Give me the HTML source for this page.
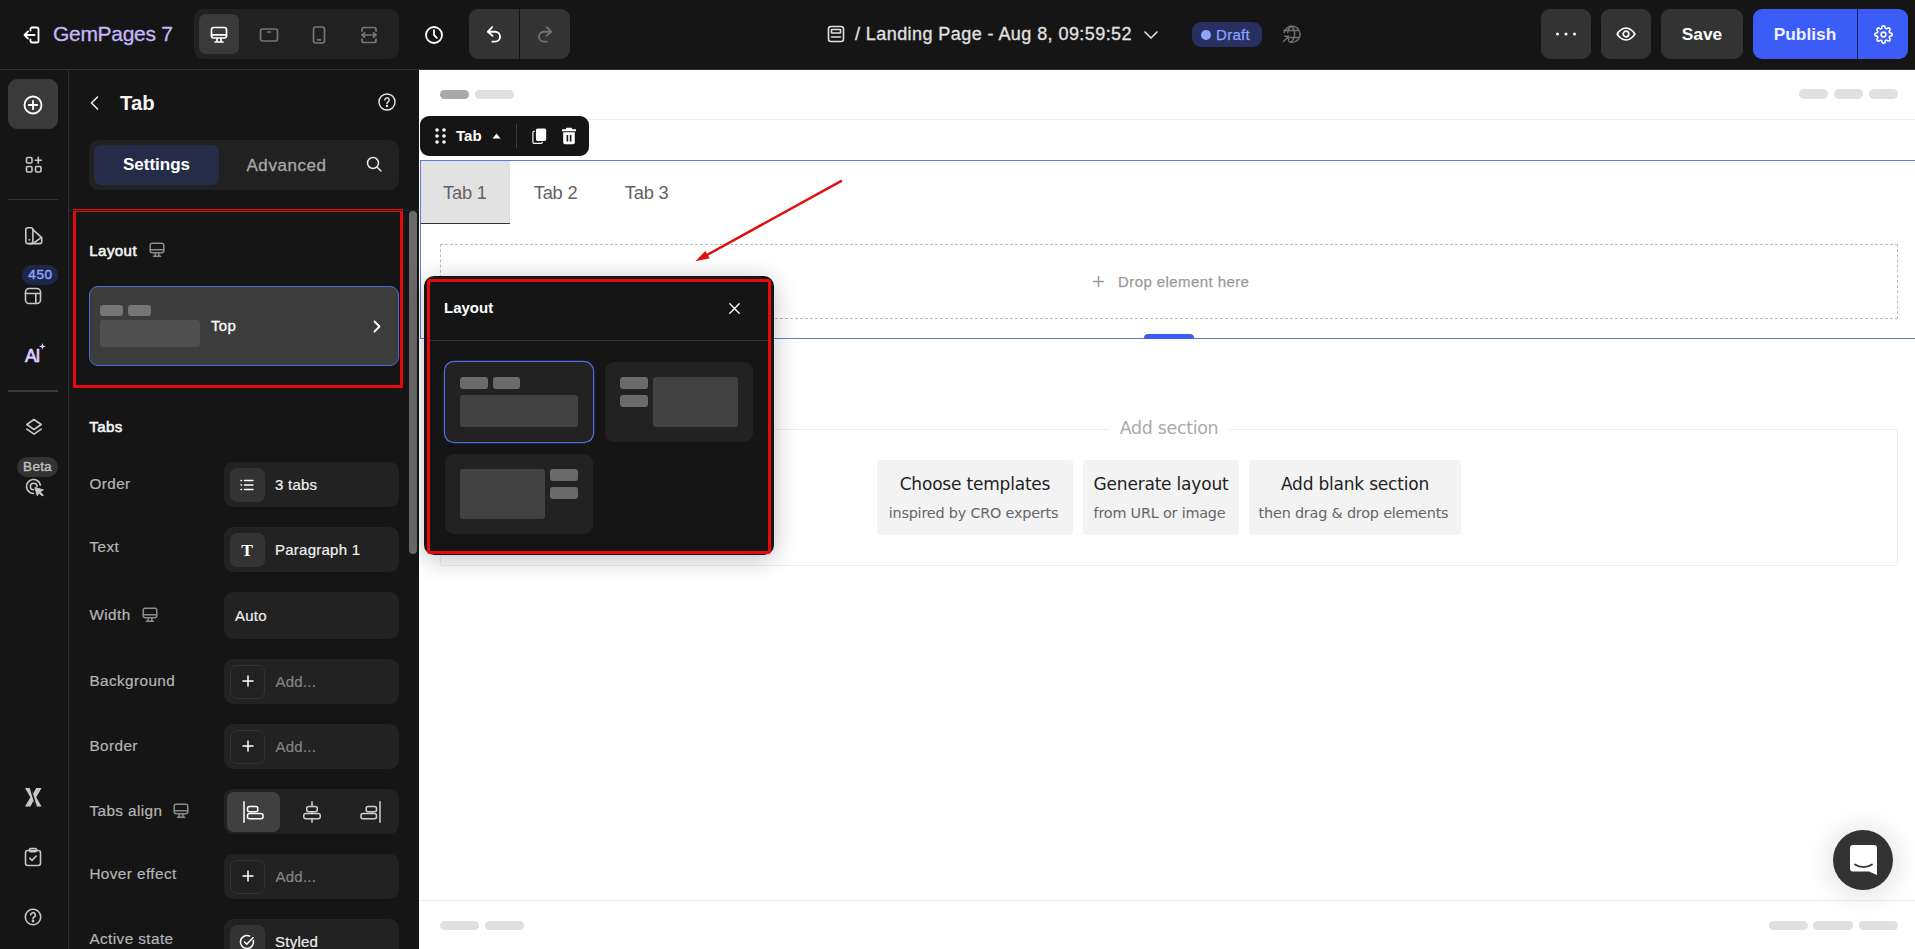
<!DOCTYPE html>
<html lang="en">
<head>
<meta charset="utf-8">
<title>GemPages 7 - Tab Layout</title>
<style>
*{box-sizing:border-box;margin:0;padding:0}
html,body{width:1915px;height:949px;overflow:hidden;background:#151515;font-family:"Liberation Sans",Arial,sans-serif;color:#fff}
.abs{position:absolute}
svg{display:block;overflow:visible}
#app{position:relative;width:1915px;height:949px;overflow:hidden;background:#151515}
/* top bar */
#topbar{position:absolute;left:0;top:0;width:1915px;height:70px;background:#151515;border-bottom:1px solid #333}
.brand{position:absolute;left:53px;top:20px;font-size:21px;line-height:28px;color:#c6b5f7;letter-spacing:-.3px;white-space:nowrap;-webkit-text-stroke:.3px #c6b5f7}
.devgroup{position:absolute;left:194px;top:9px;width:205px;height:50px;background:#212121;border-radius:9px}
.devactive{position:absolute;left:5px;top:5px;width:40px;height:40px;background:#3a3a3a;border-radius:7px}
.undogroup{position:absolute;left:469px;top:9px;width:101px;height:50px;background:#333;border-radius:9px}
.undogroup:after{content:"";position:absolute;left:50px;top:0;width:1px;height:50px;background:#151515}
.title{position:absolute;left:855px;top:22px;font-size:18px;line-height:24px;color:#e2e2e2;white-space:nowrap;letter-spacing:.43px;-webkit-text-stroke:.3px #e2e2e2}
.draft{position:absolute;left:1192px;top:22px;width:70px;height:25px;border-radius:9px;background:#263061;color:#8fa2ff;font-size:15px;line-height:25px;padding-left:24px;letter-spacing:.3px;-webkit-text-stroke:.25px #8fa2ff}
.draft:before{content:"";position:absolute;left:9px;top:7.500px;width:10px;height:10px;border-radius:50%;background:#8fa2ff}
.tbtn{position:absolute;top:9px;height:50px;background:#333;border-radius:9px}
.tbtn.txt{font-size:17.300px;font-weight:700;line-height:50px;text-align:center;color:#fff}
.pub{position:absolute;left:1753px;top:9px;width:155px;height:50px;background:#3b5cf6;border-radius:9px}
.pub span{position:absolute;left:0;top:0;width:104px;line-height:50px;text-align:center;font-size:17.300px;font-weight:700;color:#f1f1ff}
.pub:after{content:"";position:absolute;left:104px;top:0;width:1px;height:50px;background:#16205a}
/* rail */
#rail{position:absolute;left:0;top:70px;width:69px;height:879px;background:#151515;border-right:1px solid #2e2e2e}
.railadd{position:absolute;left:8px;top:9px;width:50px;height:50px;background:#3a3a3a;border-radius:9px}
.raildiv{position:absolute;left:8px;width:50px;height:1px;background:#333}
.badge{position:absolute;font-size:14px;line-height:18px;text-align:center;border-radius:9px}
/* panel */
#panel{position:absolute;left:69px;top:70px;width:350px;height:879px;background:#151515;overflow:hidden}
.ptitle{position:absolute;left:51px;top:19px;font-size:20.300px;line-height:28px;font-weight:700;color:#f5f5f5}
.seg{position:absolute;left:20px;top:70px;width:310px;height:49.500px;background:#212121;border-radius:9px}
.seg .on{position:absolute;left:5px;top:5px;width:125px;height:39.700px;background:#252c48;border-radius:7px;font-size:17px;font-weight:700;line-height:40.700px;text-align:center;color:#fff}
.seg .off{position:absolute;left:130px;top:5.700px;width:135px;height:39.700px;font-size:17px;line-height:39.700px;text-align:center;color:#a8a8a8;letter-spacing:.55px;-webkit-text-stroke:.3px #a8a8a8}
.h{position:absolute;left:20.300px;font-size:15px;font-weight:400;line-height:20px;color:#f4f4f4;letter-spacing:.45px;-webkit-text-stroke:.6px #f4f4f4}
.lbl{position:absolute;left:20.400px;font-size:15.300px;line-height:20px;color:#b5b5b5;white-space:nowrap;letter-spacing:.42px;-webkit-text-stroke:.2px #b5b5b5}
.ctl{position:absolute;left:155px;width:175px;height:45.300px;background:#222;border-radius:9px}
.ctl .ib{position:absolute;left:6px;top:5.500px;width:34.500px;height:34px;background:#333;border-radius:7px}
.ctl .ib.dk{background:#212121;border:1px solid #323232}
.ctl .v{position:absolute;left:51px;top:12.600px;font-size:15px;line-height:20px;color:#f0f0f0;white-space:nowrap;letter-spacing:.25px;-webkit-text-stroke:.2px #f0f0f0}
.ctl .v.ph{color:#848484;-webkit-text-stroke:.2px #848484;left:51.500px}
.redbox{position:absolute;border:3.300px solid #e60a0a;pointer-events:none}
/* canvas */
#canvas{position:absolute;left:419px;top:70px;width:1496px;height:879px;background:#fff;overflow:hidden}
.pill{position:absolute;height:9.600px;border-radius:5px;background:#e0e0e0}
.cbtn{position:absolute;top:390px;height:75px;background:#f3f3f3;border-radius:4px;text-align:center;font-family:"DejaVu Sans","Liberation Sans",sans-serif}
.cbtn b{display:block;margin-top:13px;font-size:17px;line-height:22px;font-weight:400;color:#222;letter-spacing:-0.2px}
.cbtn i{display:block;margin-top:9.200px;padding-right:3px;font-style:normal;font-size:14.400px;line-height:18px;color:#666;letter-spacing:-.2px}
.tabt{font-size:18.300px;line-height:26px;color:#636363;white-space:nowrap;letter-spacing:-.2px}
/* popup */
#pop{position:absolute;left:424px;top:276px;width:350px;height:278.500px;background:#151515;border-radius:10px;box-shadow:0 4px 24px rgba(0,0,0,.25)}
.opt{position:absolute;width:148px;height:80px;background:#222;border-radius:9px}
.opt.sel{box-shadow:0 0 0 1.200px #4f6fe8}
.g1{position:absolute;background:#6a6a6a;border-radius:3px}
.g2{position:absolute;background:#424242;border-radius:3px}
</style>
</head>
<body>
<div id="app">

<!-- CANVAS -->
<div id="canvas">
<!-- header placeholders -->
<div class="pill" style="left:21.100px;top:19.500px;width:29.100px;background:#a9a9a9"></div>
<div class="pill" style="left:55.800px;top:19.500px;width:39.100px"></div>
<div class="pill" style="left:1380.100px;top:19.400px;width:29.200px"></div>
<div class="pill" style="left:1414.800px;top:19.400px;width:29.200px"></div>
<div class="pill" style="left:1449.700px;top:19.400px;width:29.200px"></div>
<div class="abs" style="left:0;top:49px;width:1496px;height:1px;background:#ececec"></div>
<!-- selection outline -->
<div class="abs" style="left:1px;top:90px;width:1500px;height:179px;border:1px solid #5b7be0"></div>
<!-- tabs -->
<div class="abs" style="left:2px;top:91px;width:89px;height:63px;background:#e2e2e2;border-bottom:1px solid #333"></div>
<div class="abs tabt" style="left:24px;top:110px">Tab 1</div>
<div class="abs tabt" style="left:114.700px;top:110px">Tab 2</div>
<div class="abs tabt" style="left:205.800px;top:110px">Tab 3</div>
<!-- drop zone -->
<div class="abs" style="left:21px;top:174px;width:1458px;height:75px;border:1px dashed #bdbdbd"></div>
<svg class="abs" style="left:673.500px;top:206px" width="11" height="11" viewBox="0 0 11 11" stroke="#9a9a9a" stroke-width="1.500" stroke-linecap="round"><path d="M5.500 0.500v10M0.500 5.500h10"/></svg>
<div class="abs" style="left:699px;top:202px;font-size:15px;line-height:20px;color:#9a9a9a;white-space:nowrap;letter-spacing:.42px;-webkit-text-stroke:.25px #9a9a9a">Drop element here</div>
<!-- handle -->
<div class="abs" style="left:725px;top:264px;width:50px;height:5px;background:#3b5cf6;border-radius:4px 4px 0 0"></div>
<!-- add section -->
<div class="abs" style="left:21px;top:359px;width:1458px;height:137px;border:1px solid #eee;border-radius:3px"></div>
<div class="abs" style="left:690px;top:346px;width:120px;height:24px;background:#fff;text-align:center;font-family:'DejaVu Sans','Liberation Sans',sans-serif;font-size:17.400px;line-height:25px;color:#aaa;letter-spacing:-.3px">Add section</div>
<div class="cbtn" style="left:458px;width:196px"><b>Choose templates</b><i>inspired by CRO experts</i></div>
<div class="cbtn" style="left:664px;width:156px"><b>Generate layout</b><i>from URL or image</i></div>
<div class="cbtn" style="left:830px;width:212px"><b>Add blank section</b><i>then drag &amp; drop elements</i></div>
<!-- footer -->
<div class="abs" style="left:0;top:830px;width:1496px;height:1px;background:#ececec"></div>
<div class="pill" style="left:21px;top:850.800px;width:39.400px"></div>
<div class="pill" style="left:65.600px;top:850.800px;width:39.400px"></div>
<div class="pill" style="left:1349.800px;top:850.800px;width:39.400px"></div>
<div class="pill" style="left:1394.400px;top:850.800px;width:39.600px"></div>
<div class="pill" style="left:1439.500px;top:850.800px;width:39.500px"></div>
<!-- element toolbar -->
<div class="abs" style="left:1px;top:46px;width:169px;height:40px;background:#151515;border-radius:9px">
<svg class="abs" style="left:15px;top:12px" width="11" height="16" viewBox="0 0 11 16" fill="#fff"><circle cx="2" cy="2" r="1.800"/><circle cx="9" cy="2" r="1.800"/><circle cx="2" cy="8" r="1.800"/><circle cx="9" cy="8" r="1.800"/><circle cx="2" cy="14" r="1.800"/><circle cx="9" cy="14" r="1.800"/></svg>
<div class="abs" style="left:36px;top:10px;font-size:15px;font-weight:700;line-height:20px;color:#fff">Tab</div>
<svg class="abs" style="left:72px;top:17px" width="9" height="6" viewBox="0 0 9 6" fill="#fff"><path d="M4.500 0.500 8.500 5.500H0.500Z"/></svg>
<div class="abs" style="left:96px;top:8px;width:1px;height:24px;background:#3a3a3a"></div>
<svg class="abs" style="left:112px;top:12px" width="14.500" height="16.500" viewBox="0 0 16 18" fill="none" stroke="#fff" stroke-width="1.300" stroke-linejoin="round"><rect x="5" y="1" width="10" height="12.500" rx="1.200" fill="#fff"/><path d="M3.200 3.500H2.200A1.200 1.200 0 0 0 1 4.700v11a1.200 1.200 0 0 0 1.200 1.200h8a1.200 1.200 0 0 0 1.200-1.200v-.7"/></svg>
<svg class="abs" style="left:141px;top:11px" width="16" height="18" viewBox="0 0 16 18" fill="#fff"><path d="M5.500 0.800h5l.8 1.400H15v2H1v-2h3.700Z"/><path d="M2.200 5.200h11.600V15.500A1.800 1.800 0 0 1 12 17.300H4A1.800 1.800 0 0 1 2.200 15.500Z M5.600 8v6.500h1.600V8Z M8.800 8v6.500h1.600V8Z" fill-rule="evenodd"/></svg>
</div>
<!-- red arrow -->
<svg class="abs" style="left:270px;top:105px" width="160" height="90" viewBox="0 0 160 90"><path d="M152 6.100 17 80.500" stroke="#e01010" stroke-width="2.500" stroke-linecap="round"/><path d="M6.300 86.200 16.300 76.100 20.700 83.300Z" fill="#e01010"/></svg>
<!-- chat bubble -->
<div class="abs" style="left:1414px;top:759.700px;width:60px;height:60px;border-radius:50%;background:#333;box-shadow:0 2px 32px rgba(0,0,0,.16)">
<svg class="abs" style="left:17px;top:15px" width="27" height="30" viewBox="0 0 27 30"><path d="M3 0h21a3 3 0 0 1 3 3v27l-8-3.500H3a3 3 0 0 1-3-3V3a3 3 0 0 1 3-3Z" fill="#fff"/><path d="M5 19.500c5 3.500 12 3.500 17 0" stroke="#333" stroke-width="1.700" fill="none" stroke-linecap="round"/></svg>
</div>
</div>

<!-- TOPBAR -->
<div id="topbar">
<!-- exit icon -->
<svg class="abs" style="left:23px;top:25.500px" width="18" height="18" viewBox="0 0 18 18" fill="none" stroke="#fff" stroke-width="1.8" stroke-linecap="round" stroke-linejoin="round"><path d="M7.5 4.5V3a1.5 1.5 0 0 1 1.5-1.500h5A1.500 1.500 0 0 1 15.500 3v12a1.500 1.500 0 0 1-1.500 1.500H9A1.500 1.500 0 0 1 7.500 15v-1.500"/><path d="M11.500 9H1.500M5 5.500 1.500 9 5 12.500"/></svg>
<div class="brand">GemPages 7</div>
<div class="devgroup"><div class="devactive"></div>
<!-- desktop -->
<svg class="abs" style="left:15px;top:15.800px" width="20" height="20" viewBox="0 0 20 20" fill="none" stroke="#fff" stroke-width="1.7" stroke-linecap="round" stroke-linejoin="round"><rect x="2.500" y="2.500" width="15" height="10.500" rx="2.200"/><path d="M2.500 9.800h15M6 17h8M8 13.200v3.600M12 13.200v3.600"/></svg>
<!-- tablet -->
<svg class="abs" style="left:65px;top:15.800px" width="20" height="20" viewBox="0 0 20 20" fill="none" stroke="#767676" stroke-width="1.700" stroke-linecap="round" stroke-linejoin="round"><rect x="1.500" y="4" width="17" height="12" rx="2.200"/><path d="M8.500 7h3"/></svg>
<!-- mobile -->
<svg class="abs" style="left:115px;top:15.800px" width="20" height="20" viewBox="0 0 20 20" fill="none" stroke="#767676" stroke-width="1.700" stroke-linecap="round" stroke-linejoin="round"><rect x="4.500" y="2" width="11" height="16" rx="2.200"/><path d="M8.500 14.800h3"/></svg>
<!-- responsive -->
<svg class="abs" style="left:165px;top:15.800px" width="20" height="20" viewBox="0 0 20 20" fill="none" stroke="#767676" stroke-width="1.700" stroke-linecap="round" stroke-linejoin="round"><path d="M3 6V4.500A2 2 0 0 1 5 2.500h10a2 2 0 0 1 2 2V6M3 14v1.500a2 2 0 0 0 2 2h10a2 2 0 0 0 2-2V14"/><path d="M3 10h14M5.500 7.800 3 10l2.500 2.200M14.500 7.800 17 10l-2.500 2.200"/></svg>
</div>
<!-- clock -->
<svg class="abs" style="left:424.400px;top:24.800px" width="20" height="20" viewBox="0 0 20 20" fill="none" stroke="#fff" stroke-width="1.800" stroke-linecap="round" stroke-linejoin="round"><circle cx="10" cy="10" r="8"/><path d="M10 5.200V10l2.800 2.800"/></svg>
<div class="undogroup">
<svg class="abs" style="left:14.300px;top:14.800px" width="22" height="22" viewBox="0 0 20 20" fill="none" stroke="#fff" stroke-width="1.700" stroke-linecap="round" stroke-linejoin="round"><path d="M8.300 2.800 4.500 7l4.200 3.800"/><path d="M4.800 7H11a4.500 4.500 0 0 1 0 9H8.500"/></svg>
<svg class="abs" style="left:64.700px;top:14.800px" width="22" height="22" viewBox="0 0 20 20" fill="none" stroke="#727272" stroke-width="1.700" stroke-linecap="round" stroke-linejoin="round"><path d="M11.700 2.800 15.500 7l-4.200 3.800"/><path d="M15.200 7H9a4.500 4.500 0 0 0 0 9h2.500"/></svg>
</div>
<!-- page icon -->
<svg class="abs" style="left:827px;top:25px" width="18" height="18" viewBox="0 0 18 18" fill="none" stroke="#e2e2e2" stroke-width="1.600" stroke-linecap="round" stroke-linejoin="round"><rect x="1.500" y="1.500" width="15" height="15" rx="2.500"/><rect x="4.500" y="4.500" width="9" height="3.500" rx=".6"/><path d="M4.500 12h9"/></svg>
<div class="title">/ Landing Page - Aug 8, 09:59:52</div>
<svg class="abs" style="left:1144px;top:31px" width="14" height="8" viewBox="0 0 14 8" fill="none" stroke="#e2e2e2" stroke-width="1.600" stroke-linecap="round" stroke-linejoin="round"><path d="M1 1l6 6 6-6"/></svg>
<div class="draft">Draft</div>
<!-- globe -->
<svg class="abs" style="left:1281px;top:24px" width="20" height="20" viewBox="0 0 20 20" fill="none" stroke="#6f6f6f" stroke-width="1.500" stroke-linecap="round" stroke-linejoin="round"><path d="M3.200 8.500A8 8 0 1 1 8 17.700"/><path d="M10 2c2.600 2.200 3.600 5 3.600 8s-1 5.800-3.600 8M10 2c-2 1.800-3 4-3.300 6.500M2.800 6.500h14.400M9.500 13.500h8"/><path d="M2.500 17.500l5-5M3.800 12.300h3.900v3.900"/></svg>
<div class="tbtn" style="left:1541px;width:50px"><svg class="abs" style="left:14px;top:23px" width="22" height="4" viewBox="0 0 22 4" fill="#fff"><circle cx="2.500" cy="2" r="1.500"/><circle cx="11" cy="2" r="1.500"/><circle cx="19.500" cy="2" r="1.500"/></svg></div>
<div class="tbtn" style="left:1601px;width:50px"><svg class="abs" style="left:15px;top:15px" width="20" height="20" viewBox="0 0 20 20" fill="none" stroke="#fff" stroke-width="1.700" stroke-linecap="round" stroke-linejoin="round"><path d="M1.200 10S4.400 4 10 4s8.800 6 8.800 6-3.200 6-8.800 6S1.200 10 1.200 10Z"/><circle cx="10" cy="10" r="2.800"/></svg></div>
<div class="tbtn txt" style="left:1661px;width:82px">Save</div>
<div class="pub"><span>Publish</span>
<svg class="abs" style="left:120.500px;top:15.500px" width="19" height="19" viewBox="0 0 24 24" fill="none" stroke="#fff" stroke-width="2" stroke-linecap="round" stroke-linejoin="round"><circle cx="12" cy="12" r="3"/><path d="M19.400 15a1.650 1.650 0 0 0 .33 1.820l.06.06a2 2 0 1 1-2.830 2.830l-.06-.06a1.650 1.650 0 0 0-1.820-.33 1.650 1.650 0 0 0-1 1.510V21a2 2 0 1 1-4 0v-.09A1.650 1.650 0 0 0 9 19.400a1.650 1.650 0 0 0-1.820.33l-.06.06a2 2 0 1 1-2.830-2.830l.06-.06a1.650 1.650 0 0 0 .33-1.820 1.650 1.650 0 0 0-1.510-1H3a2 2 0 1 1 0-4h.09A1.650 1.650 0 0 0 4.600 9a1.650 1.650 0 0 0-.33-1.820l-.06-.06a2 2 0 1 1 2.830-2.830l.06.06a1.650 1.650 0 0 0 1.820.33H9a1.650 1.650 0 0 0 1-1.510V3a2 2 0 1 1 4 0v.09a1.650 1.650 0 0 0 1 1.510 1.650 1.650 0 0 0 1.820-.33l.06-.06a2 2 0 1 1 2.830 2.830l-.06.06a1.650 1.650 0 0 0-.33 1.820V9a1.650 1.650 0 0 0 1.510 1H21a2 2 0 1 1 0 4h-.09a1.650 1.650 0 0 0-1.510 1z"/></svg>
</div>
</div>

<!-- RAIL -->
<div id="rail">
<div class="railadd"><svg class="abs" style="left:15px;top:15.700px" width="20" height="20" viewBox="0 0 20 20" fill="none" stroke="#fff" stroke-width="1.800" stroke-linecap="round"><circle cx="10" cy="10" r="8.500"/><path d="M10 5.800v8.400M5.800 10h8.400"/></svg></div>
<!-- grid plus -->
<svg class="abs" style="left:24.500px;top:86.300px" width="18" height="18" viewBox="0 0 18 18" fill="none" stroke="#c8c8c8" stroke-width="1.600" stroke-linecap="round" stroke-linejoin="round"><rect x="1.500" y="1.500" width="5.500" height="5.500" rx="1.200"/><rect x="1.500" y="10.500" width="5.500" height="5.500" rx="1.200"/><rect x="10.500" y="10.500" width="5.500" height="5.500" rx="1.200"/><path d="M13.300 1.300v6M10.300 4.300h6"/></svg>
<div class="raildiv" style="top:129px"></div>
<!-- palette / swatch -->
<svg class="abs" style="left:24.700px;top:156.800px" width="18" height="18" viewBox="0 0 18 18" fill="none" stroke="#c8c8c8" stroke-width="1.600" stroke-linecap="round" stroke-linejoin="round"><rect x="0.800" y="0.800" width="7.100" height="15.800" rx="2"/><path d="M7.900 2.600 16.700 10.600V15a1.600 1.600 0 0 1-1.600 1.600H4.500M16.500 10.300 8.600 16.200"/><circle cx="4.350" cy="12.800" r=".9" fill="#c8c8c8" stroke="none"/></svg>
<div class="badge" style="left:22px;top:195.200px;width:36.300px;height:19.500px;line-height:20.500px;border-radius:10px;background:#1e264a;color:#8fa2ff;font-size:13.500px;letter-spacing:.7px;padding-left:.7px;-webkit-text-stroke:.45px #8fa2ff">450</div>
<!-- layout icon -->
<svg class="abs" style="left:23.800px;top:216.600px" width="18" height="18" viewBox="0 0 18 18" fill="none" stroke="#c8c8c8" stroke-width="1.600" stroke-linecap="round" stroke-linejoin="round"><rect x="1.500" y="1.500" width="15" height="15" rx="3.500"/><path d="M1.500 6.500h15M11.800 6.500v10"/></svg>
<!-- AI -->
<div class="abs" style="left:25px;top:275.200px;font-size:17.700px;font-weight:400;line-height:22px;color:#dcd0ff;letter-spacing:-1.300px;-webkit-text-stroke:.7px #dcd0ff">AI</div>
<svg class="abs" style="left:39px;top:273px" width="6.800" height="6.800" viewBox="0 0 8 8" fill="#dcd0ff"><path d="M4 0 5 3 8 4 5 5 4 8 3 5 0 4 3 3Z"/></svg>
<div class="raildiv" style="top:320px;height:2px;background:#383838"></div>
<!-- layers -->
<svg class="abs" style="left:24.500px;top:348.400px" width="18" height="18" viewBox="0 0 18 18" fill="none" stroke="#c8c8c8" stroke-width="1.600" stroke-linecap="round" stroke-linejoin="round"><path d="M9 1.500 16.200 6.500 9 11.500 1.800 6.500Z"/><path d="M1.800 11.200 9 16.200l7.200-5"/></svg>
<div class="badge" style="left:17px;top:387px;width:41px;height:20px;line-height:20.500px;border-radius:10px;background:#333;color:#c0c0c0;font-size:13.600px;letter-spacing:.2px;-webkit-text-stroke:.35px #c0c0c0">Beta</div>
<!-- target cursor -->
<svg class="abs" style="left:24.500px;top:407.800px" width="20" height="20" viewBox="0 0 20 20" fill="none" stroke="#c8c8c8" stroke-width="1.600" stroke-linecap="round" stroke-linejoin="round"><path d="M8.500 15.500A7 7 0 1 1 15.400 7"/><path d="M12 8.500a3.300 3.300 0 1 0-3.300 3.300"/><path d="M10 9.800l2.300 8 1.700-3 3.300 3.300 1-1-3.300-3.300 3-1.700Z" fill="#c8c8c8" stroke-width="1"/></svg>
<!-- X logo -->
<svg class="abs" style="left:25.300px;top:718px" width="16.600" height="18.600" viewBox="0 0 17 19" fill="#c8c8c8"><path d="M0 0h5.600l2.900 5.600L11.400 0H17l-5.500 9.500L17 19h-5.600l-2.900-5.600L5.600 19H0l5.500-9.500Z"/><path d="M4.800 0h1.600l5.800 19h-1.600Z" fill="#151515"/></svg>
<!-- clipboard check -->
<svg class="abs" style="left:24px;top:777px" width="18" height="20" viewBox="0 0 18 20" fill="none" stroke="#c8c8c8" stroke-width="1.600" stroke-linecap="round" stroke-linejoin="round"><rect x="1.500" y="3.500" width="15" height="15" rx="2.200"/><path d="M5.500 3.500V2.800A1.300 1.300 0 0 1 6.800 1.500h4.400a1.300 1.300 0 0 1 1.300 1.300v.7a1.300 1.300 0 0 1-1.300 1.300H6.800A1.300 1.300 0 0 1 5.500 3.500ZM5.800 11.200l2.200 2.200 4.200-4.400"/></svg>
<!-- help -->
<svg class="abs" style="left:24.300px;top:838.300px" width="18" height="18" viewBox="0 0 18 18" fill="none" stroke="#c8c8c8" stroke-width="1.600" stroke-linecap="round" stroke-linejoin="round"><circle cx="9" cy="9" r="7.700"/><path d="M6.700 7a2.300 2.300 0 1 1 3.400 2c-.7.400-1.100.9-1.100 1.600"/><circle cx="9" cy="13" r=".6" fill="#c8c8c8"/></svg>
</div>

<!-- PANEL -->
<div id="panel">
<svg class="abs" style="left:20.500px;top:26px" width="9" height="14" viewBox="0 0 9 14" fill="none" stroke="#e8e8e8" stroke-width="1.600" stroke-linecap="round" stroke-linejoin="round"><path d="M7.500 1 1.500 7l6 6"/></svg>
<div class="ptitle">Tab</div>
<svg class="abs" style="left:309px;top:23px" width="18" height="18" viewBox="0 0 18 18" fill="none" stroke="#e8e8e8" stroke-width="1.400" stroke-linecap="round" stroke-linejoin="round"><circle cx="9" cy="9" r="8"/><path d="M6.800 7a2.200 2.200 0 1 1 3.300 1.900c-.7.400-1.100.9-1.100 1.600"/><circle cx="9" cy="13" r=".5" fill="#e8e8e8"/></svg>
<div class="seg"><div class="on">Settings</div><div class="off">Advanced</div>
<svg class="abs" style="left:277px;top:16px" width="16" height="16" viewBox="0 0 16 16" fill="none" stroke="#e8e8e8" stroke-width="1.500" stroke-linecap="round"><circle cx="7" cy="7" r="5.500"/><path d="M11.200 11.200 15 15"/></svg></div>
<div class="h" style="top:171px">Layout</div><svg class="abs" style="left:79px;top:171px" width="18" height="18" viewBox="0 0 20 20" fill="none" stroke="#8a8a8a" stroke-width="1.700" stroke-linecap="round" stroke-linejoin="round"><rect x="2.500" y="2.500" width="15" height="10.500" rx="2.200"/><path d="M2.500 9.800h15M6 17h8M8 13.200v3.600M12 13.200v3.600"/></svg>
<div class="abs" style="left:20px;top:215.800px;width:310px;height:80.200px;background:#3c3c3c;border:1px solid #4867e0;border-radius:9px">
<div class="g1" style="left:10px;top:18.200px;width:23.400px;height:10.600px;background:#757575"></div><div class="g1" style="left:37.700px;top:18.200px;width:23.400px;height:10.600px;background:#757575"></div><div class="g2" style="left:10px;top:33.200px;width:100px;height:27.500px;background:#505050"></div>
<div class="abs" style="left:121px;top:29px;font-size:15px;line-height:20px;color:#fff;letter-spacing:.3px;-webkit-text-stroke:.3px #fff">Top</div>
<svg class="abs" style="left:283px;top:33px" width="8" height="13" viewBox="0 0 8 13" fill="none" stroke="#fff" stroke-width="1.800" stroke-linecap="round" stroke-linejoin="round"><path d="M1.500 1.500l5 5-5 5"/></svg>
</div>
<div class="redbox" style="left:4px;top:139px;width:330px;height:179px"></div>
<div class="h" style="top:347px">Tabs</div>
<div class="lbl" style="top:404px">Order</div><div class="ctl" style="top:392px;height:44.900px"><div class="ib"><svg class="abs" style="left:10px;top:10px" width="14" height="14" viewBox="0 0 14 14" fill="none" stroke="#fff" stroke-width="1.400" stroke-linecap="round"><path d="M4.500 2.500h8.500M4.500 7h8.500M4.500 11.500h8.500M1 2.500h.5M1 7h.5M1 11.500h.5"/></svg></div><div class="v">3 tabs</div></div>
<div class="lbl" style="top:467px">Text</div><div class="ctl" style="top:457.2px;height:44.900px"><div class="ib"><div class="abs" style="left:0;top:0;width:34px;line-height:34px;text-align:center;font-family:'Liberation Serif',serif;font-size:17.500px;font-weight:700;color:#fff">T</div></div><div class="v">Paragraph 1</div></div>
<div class="lbl" style="top:534.5px">Width</div><svg class="abs" style="left:72px;top:536.2px" width="18" height="18" viewBox="0 0 20 20" fill="none" stroke="#8a8a8a" stroke-width="1.700" stroke-linecap="round" stroke-linejoin="round"><rect x="2.500" y="2.500" width="15" height="10.500" rx="2.200"/><path d="M2.500 9.800h15M6 17h8M8 13.200v3.600M12 13.200v3.600"/></svg><div class="ctl" style="top:522.2px;height:46.800px"><div class="v" style="left:11px;top:13.700px">Auto</div></div>
<div class="lbl" style="top:601px">Background</div><div class="ctl" style="top:589px;height:44.900px"><div class="ib dk"><svg class="abs" style="left:10.500px;top:9.800px" width="12" height="12" viewBox="0 0 12 12" stroke="#fff" stroke-width="1.500" stroke-linecap="round"><path d="M6 1v10M1 6h10"/></svg></div><div class="v ph">Add...</div></div>
<div class="lbl" style="top:665.6px">Border</div><div class="ctl" style="top:654px;height:44.900px"><div class="ib dk"><svg class="abs" style="left:10.500px;top:9.800px" width="12" height="12" viewBox="0 0 12 12" stroke="#fff" stroke-width="1.500" stroke-linecap="round"><path d="M6 1v10M1 6h10"/></svg></div><div class="v ph">Add...</div></div>
<div class="lbl" style="top:730.6px">Tabs align</div><svg class="abs" style="left:103px;top:732.1px" width="18" height="18" viewBox="0 0 20 20" fill="none" stroke="#8a8a8a" stroke-width="1.700" stroke-linecap="round" stroke-linejoin="round"><rect x="2.500" y="2.500" width="15" height="10.500" rx="2.200"/><path d="M2.500 9.800h15M6 17h8M8 13.200v3.600M12 13.200v3.600"/></svg><div class="ctl" style="top:719.1px;height:44.900px"><div class="abs" style="left:2.800px;top:3.100px;width:53.400px;height:39.800px;background:#404040;border-radius:7px"></div>
<svg class="abs" style="left:19px;top:11.600px" width="21" height="22" viewBox="0 0 21 22" fill="none" stroke="#fff" stroke-width="1.500" stroke-linecap="round" stroke-linejoin="round"><path d="M1 0.800v20.400"/><rect x="4.500" y="5.500" width="10.300" height="5.300" rx="2"/><rect x="4.500" y="12.400" width="15.500" height="5.300" rx="2"/></svg>
<svg class="abs" style="left:78.500px;top:11.600px" width="18" height="22" viewBox="0 0 18 22" fill="none" stroke="#d0d0d0" stroke-width="1.500" stroke-linecap="round" stroke-linejoin="round"><path d="M9 0.800v4.700M9 10.800v1.600M9 17.700v3.500"/><rect x="3.700" y="5.500" width="10.600" height="5.300" rx="2"/><rect x="0.800" y="12.400" width="16.400" height="5.300" rx="2"/></svg>
<svg class="abs" style="left:136.300px;top:11.600px" width="21" height="22" viewBox="0 0 21 22" fill="none" stroke="#d0d0d0" stroke-width="1.500" stroke-linecap="round" stroke-linejoin="round"><path d="M20 0.800v20.400"/><rect x="6.200" y="5.500" width="10.300" height="5.300" rx="2"/><rect x="1" y="12.400" width="15.500" height="5.300" rx="2"/></svg></div>
<div class="lbl" style="top:794px">Hover effect</div><div class="ctl" style="top:784px;height:44.900px"><div class="ib dk"><svg class="abs" style="left:10.500px;top:9.800px" width="12" height="12" viewBox="0 0 12 12" stroke="#fff" stroke-width="1.500" stroke-linecap="round"><path d="M6 1v10M1 6h10"/></svg></div><div class="v ph">Add...</div></div>
<div class="lbl" style="top:858.7px">Active state</div><div class="ctl" style="top:849.3px;height:44.900px"><div class="ib"><svg class="abs" style="left:9px;top:9px" width="16" height="16" viewBox="0 0 16 16" fill="none" stroke="#fff" stroke-width="1.500" stroke-linecap="round" stroke-linejoin="round"><path d="M14.300 6.500A6.500 6.500 0 1 1 10.500 2"/><path d="M5.500 8l2.300 2.300L14 3.800"/></svg></div><div class="v">Styled</div></div>
<div class="abs" style="left:340px;top:140.500px;width:8px;height:343.500px;background:#6a6a6a;border-radius:4px"></div>
<div class="abs" style="left:0;top:140px;width:350px;height:1px;background:#262626"></div>
</div>

<!-- POPUP -->
<div id="pop">
<div class="abs" style="left:2.500px;top:2.500px;width:344.700px;height:275.200px;border:3.500px solid #e60a0a;border-radius:3px"></div>
<div class="abs h6" style="left:20px;top:22px;font-size:15px;font-weight:700;line-height:20px;color:#fff">Layout</div>
<svg class="abs" style="left:304.500px;top:26.500px" width="11" height="11" viewBox="0 0 11 11" stroke="#fff" stroke-width="1.400" stroke-linecap="round"><path d="M0.800 0.800l9.400 9.400M10.200 0.800 0.800 10.200"/></svg>
<div class="abs" style="left:6px;top:64px;width:338px;height:1px;background:#363636"></div>
<div class="opt sel" style="left:21px;top:86px">
<div class="g1" style="left:15px;top:15.200px;width:27.500px;height:12.300px"></div><div class="g1" style="left:48px;top:15.200px;width:27.200px;height:12.300px"></div><div class="g2" style="left:15px;top:32.600px;width:118px;height:32.500px"></div></div>
<div class="opt" style="left:181px;top:86px">
<div class="g1" style="left:15px;top:15.200px;width:28px;height:12.300px"></div><div class="g1" style="left:15px;top:32.600px;width:28px;height:12.300px"></div><div class="g2" style="left:48px;top:15.200px;width:85px;height:50px"></div></div>
<div class="opt" style="left:21px;top:178px">
<div class="g2" style="left:15px;top:15.200px;width:85px;height:50px"></div><div class="g1" style="left:105px;top:15.200px;width:28px;height:12.300px"></div><div class="g1" style="left:105px;top:32.600px;width:28px;height:12.300px"></div></div>
</div>

</div>
</body>
</html>
